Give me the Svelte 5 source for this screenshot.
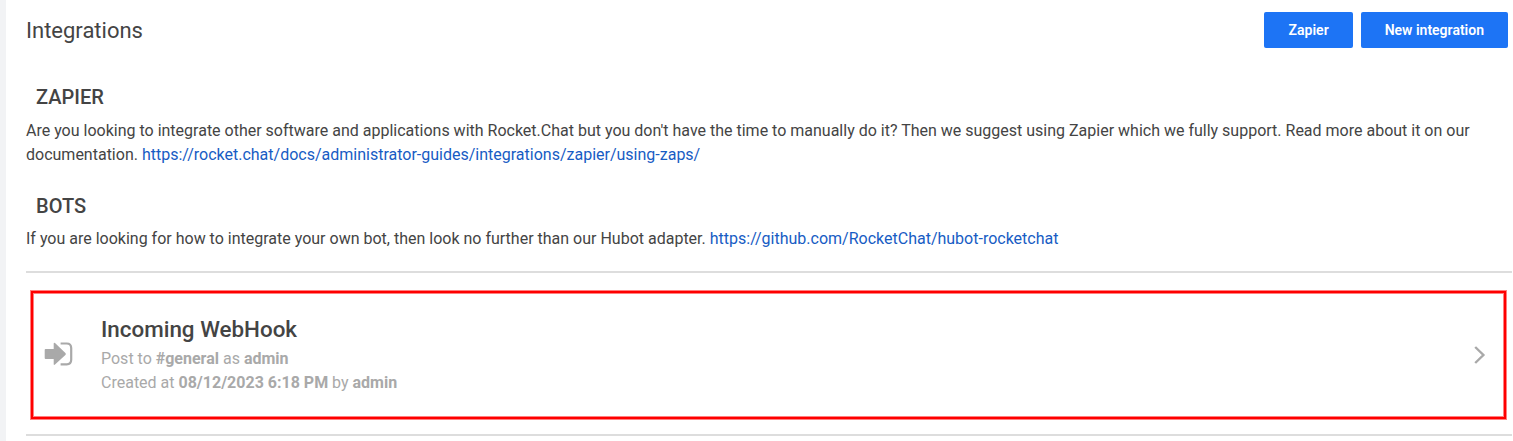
<script>
  const docs = [
    {
      title: 'ZAPIER',
      text: "Are you looking to integrate other software and applications with Rocket.Chat but you don't have the time to manually do it? Then we suggest using Zapier which we fully support. Read more about it on our documentation.",
      link: 'https://rocket.chat/docs/administrator-guides/integrations/zapier/using-zaps/'
    },
    {
      title: 'BOTS',
      text: 'If you are looking for how to integrate your own bot, then look no further than our Hubot adapter.',
      link: 'https://github.com/RocketChat/hubot-rocketchat'
    }
  ];
</script>

<div class="page">
  <header>
    <h1>Integrations</h1>
    <div class="actions">
      <button class="zapier">Zapier</button>
      <button>New integration</button>
    </div>
  </header>
  <main>
    {#each docs as doc}
      <section>
        <h2>{doc.title}</h2>
        <p>{doc.text} <a href={doc.link}>{doc.link}</a></p>
      </section>
    {/each}
    <div class="list">
      <div class="item">
        <svg class="login" viewBox="0 0 28 24" width="28" height="24">
          <path d="M1.6 6H9.7V0.6Q9.8-.9 11 0L21.4 10Q22.4 11 21.4 12L11 21.6Q9.8 22.6 9.7 21.2V16H1.6Q0.7 16 0.7 15.1V6.9Q0.7 6 1.6 6Z" fill="currentColor" />
          <path d="M16.6 .5H22.7Q27.2 .5 27.2 5V16.8Q27.2 21.3 22.7 21.3H16.6" fill="none" stroke="currentColor" stroke-width="2.2" />
        </svg>
        <div class="info">
          <h3>Incoming WebHook</h3>
          <p>Post to <b>#general</b> as <b>admin</b></p>
          <p>Created at <b>08/12/2023 6:18 PM</b> by <b>admin</b></p>
        </div>
        <svg class="chevron" viewBox="0 0 12 20" width="12" height="20">
          <path d="M1.2 2L9.4 10L1.2 18" fill="none" stroke="currentColor" stroke-width="2.4" />
        </svg>
      </div>
    </div>
  </main>
</div>

<style>
  :global(body) { margin: 0; background: #fff; }
  .page {
    box-sizing: border-box;
    height: 441px;
    overflow: hidden;
    border-left: 6px solid #f2f3f5;
    font-family: Roboto, sans-serif;
    font-size: 16px;
    line-height: 24px;
    color: #444;
  }
  header {
    display: flex;
    justify-content: space-between;
    align-items: center;
    height: 60px;
    padding: 0 5px 0 20px;
  }
  h1, h2, h3, p { margin: 0; }
  h1 { padding-top: 2px; font-size: 22px; font-weight: 400; line-height: 28px; }
  .actions { display: flex; gap: 8px; }
  button {
    height: 36px;
    padding: 0 24px;
    border: 0;
    border-radius: 2px;
    background: #1d74f5;
    color: #fff;
    font: 600 14px/20px Roboto, sans-serif;
  }
  .zapier { min-width: 89px; padding: 0 24px 0 25px; }
  main { padding: 23px 1px 0 20px; }
  section { margin-bottom: 25px; }
  h2 { padding: 0 10px; margin-bottom: 8px; font-size: 20px; font-weight: 500; line-height: 28px; }
  section + section h2 { margin-bottom: 7px; }
  a { color: #175cc4; text-decoration: none; }
  .list { margin-top: -5px; padding: 17px 5px 14px 4px; border-top: 2px solid #ddd; border-bottom: 2px solid #ddd; }
  .item {
    box-sizing: border-box;
    height: 130px;
    display: flex;
    align-items: center;
    padding: 0 20px 0 13px;
    border: 1px solid #ff8080;
    box-shadow: inset 0 0 0 2px #f00, inset 0 0 0 3px #ff8080;
    color: #a9a9a9;
  }
  .login { flex: none; overflow: visible; }
  .info { flex: 1; margin-left: 29px; }
  h3 { margin-bottom: 4px; font-size: 22.4px; font-weight: 500; line-height: 28px; color: #444; }
  .chevron { flex: none; }
</style>
